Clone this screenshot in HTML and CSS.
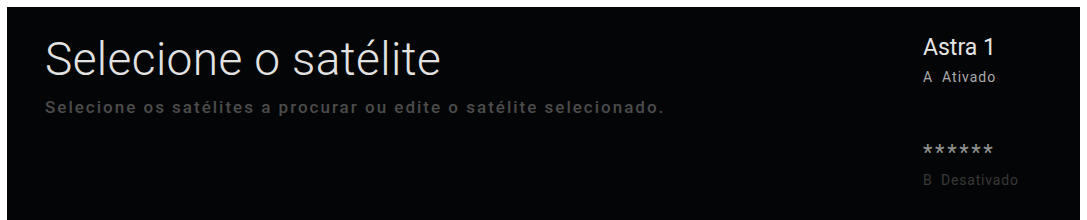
FILE: index.html
```html
<!DOCTYPE html>
<html lang="pt">
<head>
    <meta charset="UTF-8">
    <title>Selecione o satélite</title>
    <link rel="stylesheet" href="styles.css">
</head>
<body>
    <div class="screen">
        <div class="intro">
            <h1>Selecione o satélite</h1>
            <p>Selecione os satélites a procurar ou edite o satélite selecionado.</p>
        </div>
        <div class="side">
            <div class="sat">
                <div class="sat-name">Astra 1</div>
                <div class="sat-state">A&nbsp; Ativado</div>
            </div>
            <div class="sat off">
                <div class="sat-name">******</div>
                <div class="sat-state">B&nbsp; Desativado</div>
            </div>
        </div>
    </div>
</body>
</html>
```

FILE: styles.css
```css
body {
    margin: 0;
    background-color: #ffffff;
    font-family: Roboto, 'Liberation Sans', sans-serif;
}
.screen {
    margin: 7px 7px 0 7px;
    height: 213px;
    background-color: #040506;
    display: flex;
    justify-content: space-between;
    box-sizing: border-box;
    padding: 25px 0 0 38px;
}
h1 {
    margin: 0;
    font-weight: 300;
    font-size: 46px;
    line-height: 54px;
    letter-spacing: 0.4px;
    color: #e2e2e2;
}
.intro p {
    margin: 11px 0 0 0;
    font-size: 17px;
    line-height: 20px;
    font-weight: 500;
    letter-spacing: 2px;
    color: #4c4c4c;
}
.side {
    width: 157px;
    padding-top: 3px;
}
.sat {
    margin-bottom: 55px;
}
.sat-name {
    font-size: 23px;
    line-height: 26px;
    color: #e4e4e4;
}
.sat-state {
    margin-top: 7px;
    font-size: 14px;
    line-height: 18px;
    letter-spacing: 1px;
    color: #ababab;
}
.off .sat-name {
    font-size: 22px;
    line-height: 24px;
    letter-spacing: 2.6px;
    color: #959595;
}
.off .sat-state {
    margin-top: 6px;
    letter-spacing: 0.8px;
    color: #383838;
}
```
